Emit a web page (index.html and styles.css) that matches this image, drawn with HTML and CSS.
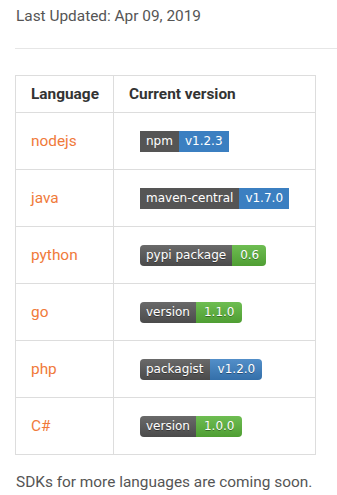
FILE: index.html
```html
<!DOCTYPE html>
<html>
<head>
<meta charset="utf-8">
<link rel="stylesheet" href="styles.css">
</head>
<body>
<div class="page">
  <p class="updated">Last Updated: Apr 09, 2019</p>
  <hr class="rule">
  <table class="sdk">
    <thead>
      <tr><th class="lang">Language</th><th>Current version</th></tr>
    </thead>
    <tbody>
      <tr><td class="lang"><a href="#">nodejs</a></td><td><span class="badge flat"><span class="lbl">npm</span><span class="val blue">v1.2.3</span></span></td></tr>
      <tr><td class="lang"><a href="#">java</a></td><td><span class="badge flat"><span class="lbl">maven-central</span><span class="val blue">v1.7.0</span></span></td></tr>
      <tr><td class="lang"><a href="#">python</a></td><td><span class="badge plastic"><span class="lbl">pypi package</span><span class="val green">0.6</span></span></td></tr>
      <tr><td class="lang"><a href="#">go</a></td><td><span class="badge plastic"><span class="lbl">version</span><span class="val green">1.1.0</span></span></td></tr>
      <tr><td class="lang"><a href="#">php</a></td><td><span class="badge plastic"><span class="lbl">packagist</span><span class="val blue">v1.2.0</span></span></td></tr>
      <tr><td class="lang"><a href="#">C#</a></td><td><span class="badge plastic"><span class="lbl">version</span><span class="val green">1.0.0</span></span></td></tr>
    </tbody>
  </table>
  <p class="note">SDKs for more languages are coming soon.</p>
</div>
</body>
</html>
```
FILE: styles.css
```css
html, body {
  margin: 0;
  padding: 0;
  background: #fff;
}
body {
  font-family: Roboto, "Liberation Sans", sans-serif;
  font-size: 15.4px;
  color: #555;
}
.page {
  padding-left: 15px;
}
.updated {
  margin: 0;
  padding-top: 5px;
  line-height: 22px;
  padding-left: 1px;
}
.rule {
  border: 0;
  border-top: 1px solid #e6e6e6;
  margin: 21px 0 26px 0;
  height: 0;
}
.sdk {
  border-collapse: collapse;
  width: 301px;
}
.sdk th, .sdk td {
  border: 1px solid #dddddd;
  text-align: left;
  padding: 0 0 0 15px;
}
.sdk th {
  height: 36px;
  font-weight: bold;
  color: #333;
  font-size: 15.4px;
}
.sdk td {
  height: 56px;
}
.sdk .lang {
  width: 82px;
}
.sdk a {
  color: #f07a3a;
  text-decoration: none;
  font-size: 15.4px;
}
.badge {
  display: inline-flex;
  height: 21px;
  margin-left: 11px;
  font-family: "DejaVu Sans", Verdana, sans-serif;
  font-size: 12px;
  line-height: 21px;
  color: #fff;
  vertical-align: middle;
  overflow: hidden;
}
.badge .lbl, .badge .val {
  padding: 0 6px;
  display: block;
}
.badge .lbl {
  background: #555;
}
.badge .blue {
  background: #3b7fc1;
}
.badge .green {
  background: #5ab43a;
}
.badge.plastic {
  border-radius: 4px;
  text-shadow: 0 1px 0 rgba(0,0,0,0.35);
}
.badge.plastic .val {
  padding: 0 7px 0 8px;
}
.badge.plastic .lbl, .badge.plastic .val {
  background-image: linear-gradient(to bottom, rgba(255,255,255,0.12), rgba(0,0,0,0.12));
}
.note {
  margin: 16px 0 0 0;
  line-height: 22px;
  padding-left: 1px;
}
```
